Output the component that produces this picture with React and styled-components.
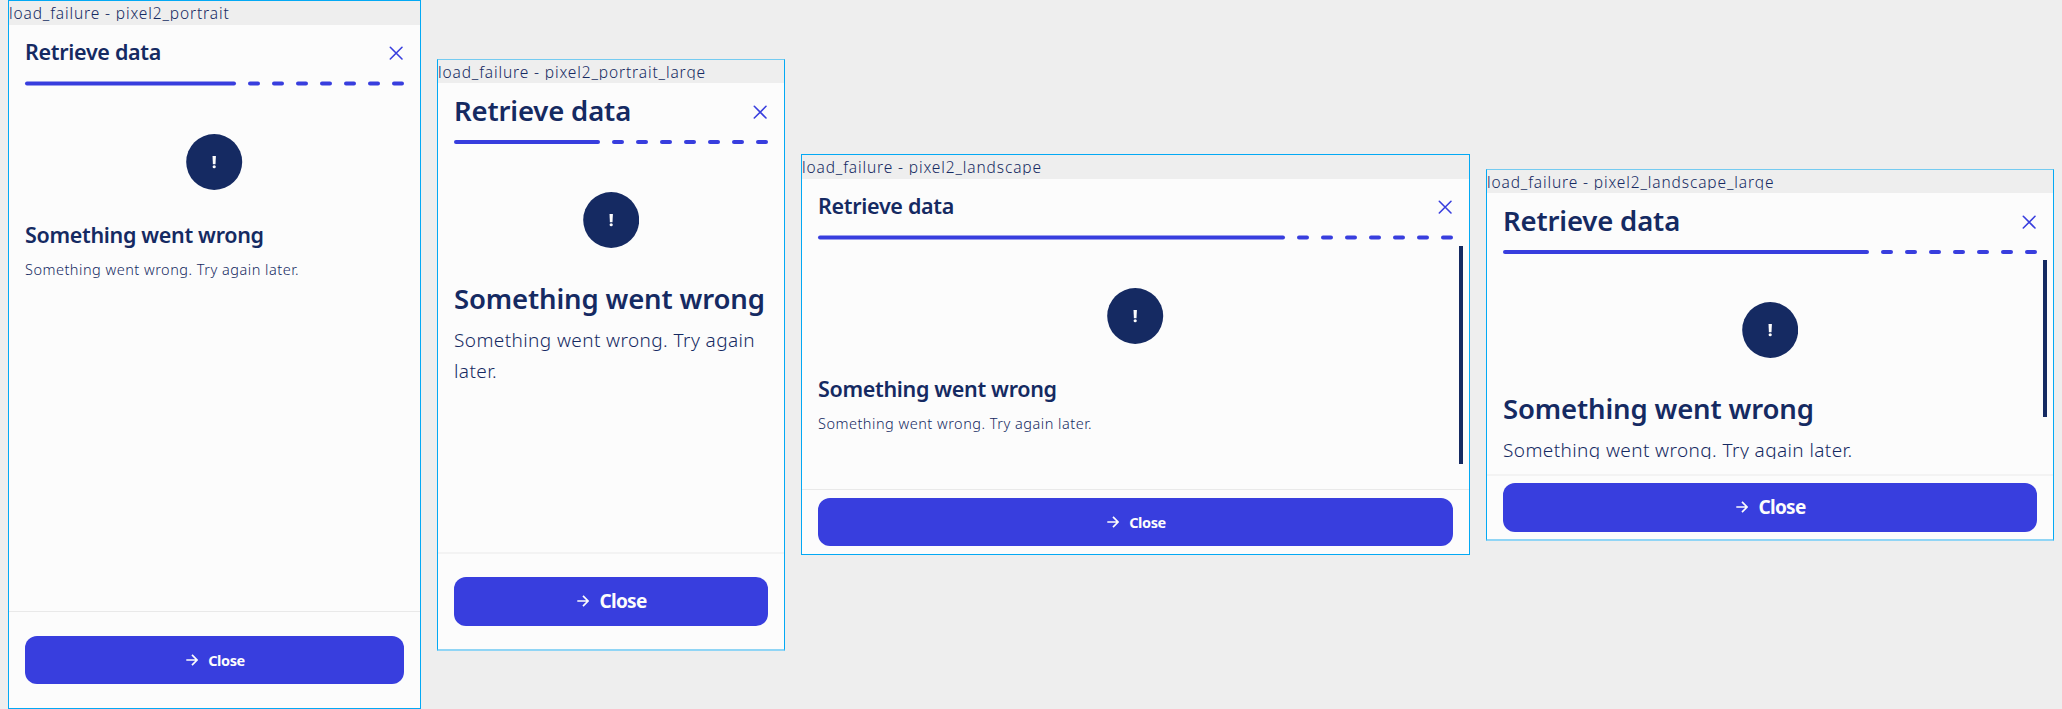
import React from "react";
import styled, { createGlobalStyle } from "styled-components";

const GlobalStyle = createGlobalStyle`
  body { margin: 0; background: #eeeeee; font-family: "Noto Sans", "Open Sans", sans-serif; color: #152a62; }
  * { box-sizing: border-box; }
`;

const Board = styled.main`
  display: flex;
  align-items: flex-start;
  gap: 16px;
  width: 2062px;
  height: 709px;
  padding-left: 8px;
  overflow: hidden;
`;

const Screen = styled.section`
  display: flex;
  flex-direction: column;
  flex: none;
  width: ${(p) => p.$width}px;
  height: ${(p) => p.$height}px;
  margin-top: ${(p) => p.$top}px;
  background: #fcfcfc;
  border: 1px solid #03a9f4;
  ${(p) => p.$soft && "border-top-color: #74cbf1; border-bottom: 2px solid #90d5f5;"}
`;

const Caption = styled.div`
  flex: none;
  height: ${(p) => (p.$large ? 23 : 24)}px;
  background: #eeeeee;
`;

const CaptionText = styled.div`
  height: 20px;
  overflow: hidden;
  font-size: 15.5px;
  line-height: 24px;
  font-weight: 300;
  letter-spacing: 0.87px;
  white-space: nowrap;
`;

const Header = styled.header`
  flex: none;
  height: 67px;
  padding: 0 16px;
`;

const TitleRow = styled.div`
  display: flex;
  align-items: center;
  justify-content: space-between;
  height: ${(p) => (p.$large ? 53 : 52)}px;
  padding-top: 2px;
`;

const Title = styled.h1`
  margin: 0;
  font-size: ${(p) => (p.$large ? 27.5 : 21.5)}px;
  line-height: ${(p) => (p.$large ? 36 : 28)}px;
  font-weight: 600;
  letter-spacing: ${(p) => (p.$large ? -0.15 : -0.3)}px;
  white-space: nowrap;
`;

const CloseIcon = styled.svg`
  display: block;
  width: 15px;
  height: 15px;
  margin-top: ${(p) => (p.$large ? 3 : 2)}px;
`;

const Progress = styled.div`
  display: flex;
  gap: 12px;
  margin-top: 4px;
  transform: translateY(${(p) => (p.$large ? 0 : 0.5)}px);
`;

const Bar = styled.span`
  flex: 1;
  height: 4px;
  border-radius: 2px;
  background: #383ede;
`;

const Dash = styled(Bar)`
  flex: 0 0 12px;
`;

const Content = styled.div`
  display: flex;
  flex: 1;
  min-height: 0;
  justify-content: space-between;
  margin-bottom: ${(p) => p.$gap}px;
  overflow: hidden;
`;

const Message = styled.div`
  flex: 1;
  min-width: 0;
  padding: 42px 0 0 16px;
`;

const Alert = styled.svg`
  display: block;
  width: ${(p) => (p.$large ? 56 : 57)}px;
  height: 57px;
  margin: 0 auto;
`;

const Heading = styled(Title).attrs({ as: "h2" })`
  margin-top: ${(p) => (p.$large ? 32 : 30)}px;
  letter-spacing: ${(p) => (p.$large ? -0.15 : -0.33)}px;
`;

const Body = styled.p`
  margin: 8px 0 0;
  font-size: ${(p) => (p.$large ? 19 : 14.5)}px;
  line-height: ${(p) => (p.$large ? 31 : 24)}px;
  font-weight: 300;
  letter-spacing: ${(p) => (p.$large ? 0.4 : 0.5)}px;
`;

const Rail = styled.div`
  flex: none;
  width: 16px;
  padding-left: 6px;
`;

const Thumb = styled.div`
  width: 4px;
  height: ${(p) => p.$size}px;
  background: #152a62;
`;

const Footer = styled.footer`
  flex: none;
  padding: ${(p) => p.$pad}px 16px;
  border-top: 1px solid #e9e9e9;
  ${(p) => p.$soft && "border-top: 2px solid #f3f3f3;"}
`;

const Action = styled.button`
  display: flex;
  align-items: center;
  justify-content: center;
  gap: 10px;
  width: 100%;
  height: ${(p) => (p.$large ? 49 : 48)}px;
  padding: 0 0 1px 2px;
  border: 0;
  border-radius: 12px;
  background: #383ede;
  color: #fcfcfc;
  font-family: inherit;
  font-size: ${(p) => (p.$large ? 19 : 14.5)}px;
  font-weight: 700;
  letter-spacing: ${(p) => (p.$large ? -0.7 : -0.4)}px;
`;

const Arrow = styled.svg`
  display: block;
  width: 12px;
  height: 12px;
`;

const SCREENS = [
  { name: "pixel2_portrait", width: 413, height: 709, top: 0, pad: 24, gap: 16 },
  { name: "pixel2_portrait_large", width: 348, height: 592, top: 59, pad: 23, gap: 15, large: true },
  { name: "pixel2_landscape", width: 669, height: 401, top: 154, pad: 8, gap: 16, thumb: 218 },
  { name: "pixel2_landscape_large", width: 568, height: 372, top: 169, pad: 7, gap: 15, thumb: 157, large: true },
];

function Preview({ name, width, height, top, pad, gap, thumb, large }) {
  return (
    <Screen $width={width} $height={height} $top={top} $soft={large}>
      <Caption $large={large}>
        <CaptionText>load_failure - {name}</CaptionText>
      </Caption>
      <Header>
        <TitleRow $large={large}>
          <Title $large={large}>Retrieve data</Title>
          <CloseIcon $large={large} viewBox="0 0 15 15" fill="none" stroke="#383ede" strokeWidth="1.6" strokeLinecap="round">
            <path d="M1.3 1.3 13 13M13 1.3 1.3 13" />
          </CloseIcon>
        </TitleRow>
        <Progress $large={large}>
          <Bar />
          {Array.from({ length: 7 }, (_, i) => <Dash key={i} />)}
        </Progress>
      </Header>
      <Content $gap={gap}>
        <Message>
          <Alert $large={large} viewBox={large ? "0 0 56 57" : "0 0 57 57"}>
            <circle cx="28.2" cy="28" r="28" fill="#152a62" />
            <path d="M26.5 22h3.4l-.4 8.2h-2.6z" fill="#fcfcfc" />
            <ellipse cx="28.2" cy="32.7" rx="1.6" ry="1.5" fill="#fcfcfc" />
          </Alert>
          <Heading $large={large}>Something went wrong</Heading>
          <Body $large={large}>Something went wrong. Try again later.</Body>
        </Message>
        <Rail>{thumb && <Thumb $size={thumb} />}</Rail>
      </Content>
      <Footer $pad={pad} $soft={large}>
        <Action $large={large}>
          <Arrow viewBox="0 0 12 12" fill="none" stroke="#fcfcfc" strokeWidth="1.7">
            <path d="M.3 6h10.4M6 .8 11.1 6 6 11.2" />
          </Arrow>
          Close
        </Action>
      </Footer>
    </Screen>
  );
}

export default function App() {
  return (
    <>
      <GlobalStyle />
      <Board>
        {SCREENS.map((s) => <Preview key={s.name} {...s} />)}
      </Board>
    </>
  );
}
